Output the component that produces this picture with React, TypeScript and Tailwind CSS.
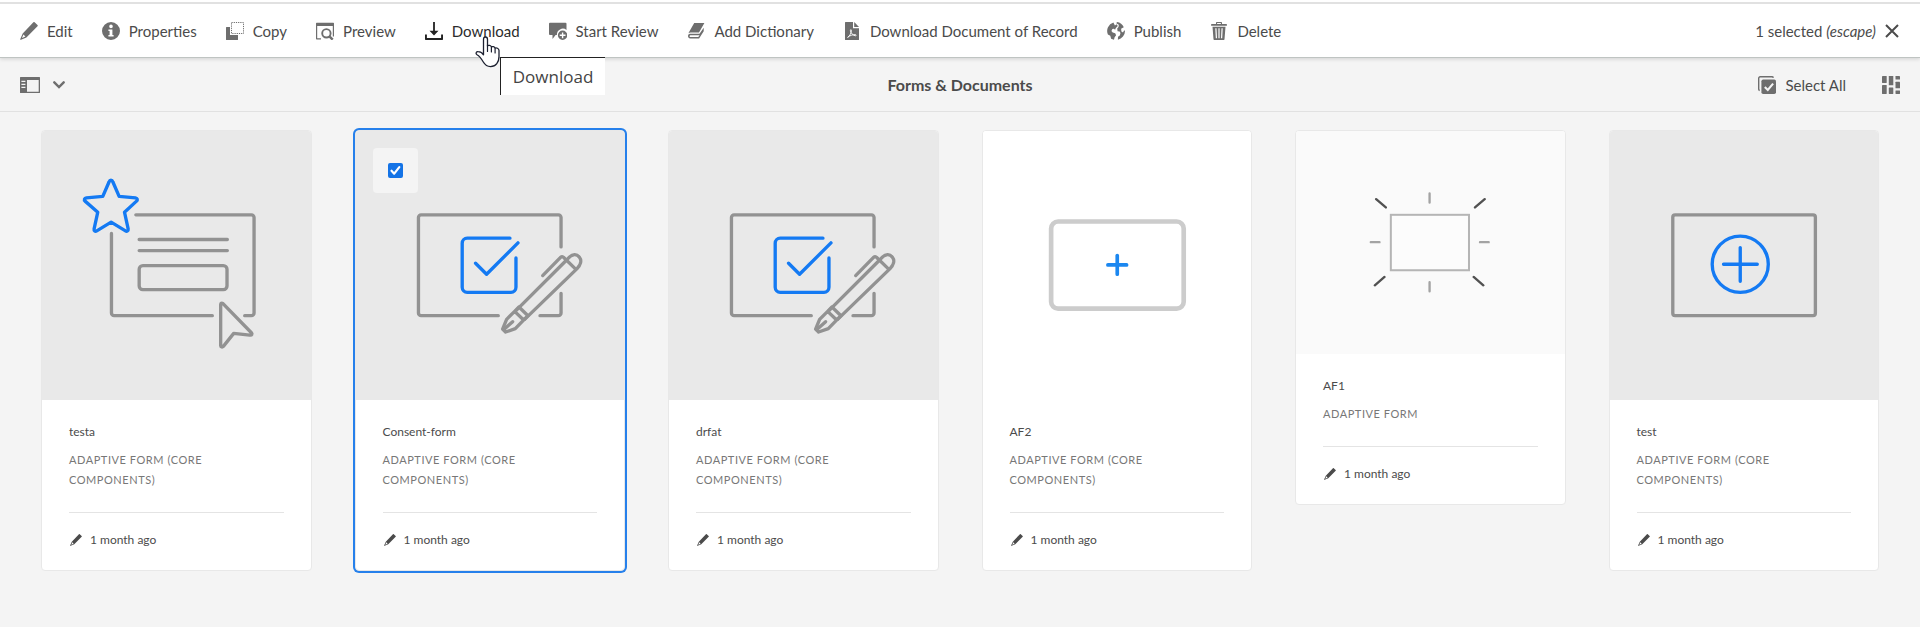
import React from "react";

type IconProps = { className?: string };

function Icon({ children, className = "h-[18px] w-[18px]" }: { children: React.ReactNode; className?: string }) {
  return (
    <svg viewBox="0 0 18 18" className={`shrink-0 ${className}`} fill="currentColor" aria-hidden="true">
      {children}
    </svg>
  );
}

const EditIcon = ({ className }: IconProps) => (
  <Icon className={className}>
    <path d="M17.5 3.1 14.6.3a.8.8 0 0 0-1.2 0L2.7 11.6.3 17a.5.5 0 0 0 .7.7l5.400-2.300L17.500 4.300a.9.9 0 0 0 0-1.200ZM1.900 16.100l1.600-3.600 1.900 2Z" />
  </Icon>
);

const InfoIcon = () => (
  <Icon>
    <path
      fillRule="evenodd"
      d="M9 0a9 9 0 1 0 0 18A9 9 0 0 0 9 0Zm0 2.6a1.8 1.8 0 1 1 0 3.6 1.8 1.8 0 0 1 0-3.6ZM6.4 14.4v-1.3h1.2V8.9H6.4V7.6h4v5.500h1.200v1.300Z"
    />
  </Icon>
);

const CopyIcon = () => (
  <Icon>
    <path d="M0 5.6a.6.6 0 0 1 .6-.6H4v8h8v4.4a.6.6 0 0 1-.6.6H.6a.6.6 0 0 1-.6-.6Z" />
    <rect x="5.500" y=".5" width="12" height="11" fill="none" stroke="currentColor" strokeDasharray="1.200 1" />
  </Icon>
);

const PreviewIcon = () => (
  <Icon>
    <path d="M0 1.4A.6.6 0 0 1 .6.8h16.8a.6.6 0 0 1 .6.6v13h-1.2V4H1.2v12.2H5v1.2H.6a.6.6 0 0 1-.6-.6Z" />
    <circle cx="10.400" cy="11.300" r="4.200" fill="none" stroke="currentColor" strokeWidth="1.900" />
    <path d="m13.200 14.200 3.500 3.500" stroke="currentColor" strokeWidth="2.400" />
  </Icon>
);

const DownloadIcon = () => (
  <Icon>
    <path d="M8.100 0h1.800v8.800h3.600L9 13.600 4.500 8.800h3.600Z" />
    <path d="M0 12.400h1.900v3.700h14.200v-3.700H18v4.900a.7.700 0 0 1-.7.700H.700a.7.700 0 0 1-.7-.7Z" />
  </Icon>
);

const ReviewIcon = () => (
  <Icon>
    <path d="M1 .8h15.500a1 1 0 0 1 1 1v6.100a6 6 0 0 0-9.600 5.200H6.600L3.500 17v-3.900H1a1 1 0 0 1-1-1V1.800a1 1 0 0 1 1-1Z" />
    <path
      fillRule="evenodd"
      d="M13.600 8.600a4.700 4.700 0 1 0 0 9.400 4.700 4.700 0 0 0 0-9.400Zm-.7 1.800h1.400v2.200h2.200V14h-2.200v2.200h-1.400V14h-2.200v-1.400h2.200Z"
    />
  </Icon>
);

const DictionaryIcon = () => (
  <Icon>
    <path d="M7.200 1h10.200L12 10.600H3.600C1.900 10.600 1.200 11.400.800 12.200Z" />
    <path
      fillRule="evenodd"
      d="M1.100 13.200c.300-1 1.200-1.500 2.500-1.500h8.900l4.200-6v3.500l-4.600 7.200H3.400c-1.800 0-2.700-1.500-2.300-3.200Zm2.700 0c-.9 0-1.200.5-1.200 1s.4.900 1.100.900h7.600l1.300-1.900Z"
    />
  </Icon>
);

const PdfIcon = () => (
  <Icon>
    <path d="M2.600 0H10v6.200h6V17.400a.6.600 0 0 1-.6.600H2.600a.6.600 0 0 1-.6-.600V.600a.6.600 0 0 1 .6-.600Z" />
    <path d="M11.200 0 16 5H11.200Z" />
    <path
      d="M4.600 15.400c1.800-.8 3.700-4.400 3.800-7 .1-1.100-1.200-1-1 .2.400 2.600 2.800 5 5 5.200 1.100 0 1-1.200-.3-1.200-2.600 0-5.200.9-7.500 2.800Z"
      fill="none"
      stroke="#fff"
      strokeWidth=".9"
    />
  </Icon>
);

const GlobeIcon = () => (
  <Icon>
    <path d="M6.400.4a9 9 0 0 0-5.500 12.100l2.400 1.200.8 3 2.900 1.100.6-2.600 1.500-2-.9-1.900-2.500-.7-1.300-1.700 1-1.800 1.500-.4 1.200 1 .7-1.700 2-1.900L9.600 2.200 7.900 3.400Z" />
    <path d="M10 .1 9.300 1.200l2.500 1.600-.3 2.200-1.300 1.600.4 2.600 2 .3.900 1.500-.7 2.500-1.800 1.200-.1 3A9 9 0 0 0 18 9l-.8-.7-1.200 2.300-1.600-1.200-.3-2.600 1.700-1 1-.5A9 9 0 0 0 10 .1Z" />
  </Icon>
);

const TrashIcon = () => (
  <Icon>
    <path
      fillRule="evenodd"
      d="M6 2V.8A.8.800 0 0 1 6.800 0h4.400a.8.800 0 0 1 .8.800V2h4.400a.5.500 0 0 1 .5.500v1.300H1.100V2.500A.5.500 0 0 1 1.600 2Zm1.100 0h3.800V1.100H7.100Z"
    />
    <path
      fillRule="evenodd"
      d="M2.500 4.700h13l-1 12.600a.7.700 0 0 1-.7.700H4.200a.7.700 0 0 1-.7-.700ZM5.300 6.200l.5 10h1.200l-.5-10Zm3.100 0v10h1.200v-10Zm3.100 0-.5 10h1.200l.5-10Z"
    />
  </Icon>
);

const RailIcon = () => (
  <svg viewBox="0 0 20 16" className="h-4 w-5 shrink-0" fill="currentColor" aria-hidden="true">
    <path
      fillRule="evenodd"
      d="M.6 0h18.800a.6.600 0 0 1 .6.600v14.800a.6.600 0 0 1-.6.600H.600a.6.600 0 0 1-.6-.600V.600A.6.600 0 0 1 .600 0ZM7 3v11.800h11.700V3ZM1.400 3.700V5h4V3.700Zm0 3V8h4V6.700Zm0 3V11h4V9.700Z"
    />
  </svg>
);

const ChevronIcon = () => (
  <svg viewBox="0 0 12 8" className="h-2 w-3 shrink-0" fill="none" aria-hidden="true">
    <path d="m1.300 1.300 4.700 4.700 4.700-4.700" stroke="currentColor" strokeWidth="2.400" strokeLinecap="round" />
  </svg>
);

const SelectAllIcon = () => (
  <Icon>
    <path d="M1.700 14.500A1.500 1.500 0 0 1 .7 13V2.200A1.500 1.500 0 0 1 2.200.7H14a1.500 1.500 0 0 1 1.400 1" fill="none" stroke="currentColor" strokeWidth="1.400" />
    <rect x="3.400" y="3.400" width="14.600" height="14.600" rx="1.800" />
    <path d="m6.800 11 3 3 5.300-6.400" fill="none" stroke="#f4f4f4" strokeWidth="2.100" />
  </Icon>
);

const CardViewIcon = () => (
  <Icon>
    <rect x="0" y="0" width="4.700" height="7" rx=".4" />
    <rect x="0" y="9" width="4.700" height="9" rx=".4" />
    <rect x="6.800" y="0" width="4.500" height="9.300" rx=".4" />
    <rect x="6.800" y="11.500" width="4.500" height="6.500" rx=".4" />
    <rect x="13.500" y="0" width="4.500" height="3.600" rx=".4" />
    <rect x="13.500" y="5.800" width="4.500" height="6.500" rx=".4" />
    <rect x="13.500" y="14.400" width="4.500" height="3.600" rx=".4" />
  </Icon>
);

const CloseIcon = () => (
  <svg viewBox="0 0 14 14" className="h-[14px] w-[14px] shrink-0" fill="none" aria-hidden="true">
    <path d="m1 1 12 12M13 1 1 13" stroke="currentColor" strokeWidth="2" />
  </svg>
);

function PointerCursor() {
  return (
    <svg viewBox="0 0 26 32" className="h-8 w-[26px]" aria-hidden="true">
      <path
        d="M8.500 18V3.500C8.500 1.800 9.500 1 10.500 1s2 .8 2 2.500V10c.6-1 3.400-.8 3.900.9 1-.7 3.200-.2 3.600 1.200 1.300-.6 4 .1 4 2.500v6c0 5.500-3 10-8.500 10-3.500 0-5.500-1.700-7.200-4.600C6.600 23 5 20.300 2 18.700c-1.700-1.200-.8-3.300 1.200-3.100 2 .1 4 1 5.300 3.200Z"
        fill="#fff"
        stroke="#1c2030"
        strokeWidth="1.300"
        strokeLinejoin="round"
      />
      <path d="M12.500 9v6.500M16.400 11v5M20.100 12.500V17" stroke="#1c2030" strokeWidth="1.200" strokeLinecap="round" />
    </svg>
  );
}

const artStroke = { fill: "none", strokeWidth: 10, strokeLinecap: "round", strokeLinejoin: "round" } as const;

function TemplateArt() {
  return (
    <svg viewBox="126 63 804 804" className="w-full" aria-hidden="true">
      <g {...artStroke} stroke="#929292">
        <path d="M407 314h346a8 8 0 0 1 8 8v286a8 8 0 0 1-8 8h-20M334 370v238a8 8 0 0 0 8 8h294" />
        <path d="M417 388h264M417 421h264" />
        <rect x="417" y="466" width="263" height="72" rx="11" />
        <path d="M661 583v122c0 5 5 6 8 3l31-39 48 5c7 1 8-4 5-7l-85-87c-4-3-7-1-7 3Z" />
      </g>
      <path
        {...artStroke}
        stroke="#147af3"
        d="M327 215c2-6 9-6 11 0l19 44 49 4c6 1 7 7 3 10l-36 33 11 50c1 6-4 9-8 6l-43-26-43 26c-5 3-9 0-8-6l11-50-38-33c-4-3-2-9 4-10l49-4Z"
      />
    </svg>
  );
}

function SignArt() {
  return (
    <svg viewBox="58 63 804 804" className="w-full" aria-hidden="true">
      <g {...artStroke} stroke="#929292">
        <path d="M672 410v-88a8 8 0 0 0-8-8H253a8 8 0 0 0-8 8v286a8 8 0 0 0 8 8h231M609 616h55a8 8 0 0 0 8-8v-59" />
        <path d="m537 601 151-151c20-24 32-18 39-9 8 10 3 24-7 34L563 627" />
        <path d="m617 496 52-53c4-5 8-5 11-1l35 34" />
        <path d="m533 603 27 26 13-13-27-26ZM533 603l-24 24-12 29 9 9 29-10 24-25" />
        <path d="m500 658 27-24" />
      </g>
      <path
        {...artStroke}
        stroke="#147af3"
        d="M519 384H391a15 15 0 0 0-15 15v132a15 15 0 0 0 15 15h131a15 15 0 0 0 15-15v-88M416 459l33 33 94-94"
      />
    </svg>
  );
}

function BlankArt() {
  return (
    <svg viewBox="69 63 804 804" className="w-full" aria-hidden="true">
      <rect x="273" y="334" width="397" height="261" rx="21" fill="none" stroke="#ccc" strokeWidth="14" />
      <path d="M471 436v56M443 464h56" stroke="#1b87f0" strokeWidth="11" strokeLinecap="round" />
    </svg>
  );
}

function AdaptiveArt() {
  return (
    <svg viewBox="79 63 804 669" className="w-full" aria-hidden="true">
      <rect x="363" y="314" width="234" height="166" fill="#fcfcfc" stroke="#b5b5b5" strokeWidth="6" />
      <path d="M479 250v27M479 516v27M303 396h26M630 396h26" stroke="#a3a3a3" strokeWidth="7" strokeLinecap="round" />
      <path d="m319 267 29 25M644 267l-29 25M344 500l-29 25M611 500l29 25" stroke="#515151" strokeWidth="7" strokeLinecap="round" />
    </svg>
  );
}

function AddArt() {
  return (
    <svg viewBox="60 63 804 804" className="w-full" aria-hidden="true">
      <rect {...artStroke} x="248" y="314" width="427" height="302" rx="7" stroke="#929292" />
      <g {...artStroke} stroke="#147af3">
        <circle cx="450" cy="462" r="84" />
        <path d="M450 412v101M400 462h101" />
      </g>
    </svg>
  );
}

const actions = [
  { label: "Edit", icon: <EditIcon /> },
  { label: "Properties", icon: <InfoIcon /> },
  { label: "Copy", icon: <CopyIcon /> },
  { label: "Preview", icon: <PreviewIcon /> },
  { label: "Download", icon: <DownloadIcon />, hovered: true },
  { label: "Start Review", icon: <ReviewIcon /> },
  { label: "Add Dictionary", icon: <DictionaryIcon /> },
  { label: "Download Document of Record", icon: <PdfIcon /> },
  { label: "Publish", icon: <GlobeIcon /> },
  { label: "Delete", icon: <TrashIcon /> },
];

const core = "Adaptive Form (Core Components)";

const cards = [
  { name: "testa", type: core, art: <TemplateArt />, tone: "bg-[#e9e9e9]" },
  { name: "Consent-form", type: core, art: <SignArt />, tone: "bg-[#e9e9e9]", selected: true },
  { name: "drfat", type: core, art: <SignArt />, tone: "bg-[#e9e9e9]" },
  { name: "AF2", type: core, art: <BlankArt />, tone: "bg-white" },
  { name: "AF1", type: "Adaptive Form", art: <AdaptiveArt />, tone: "bg-[#fafafa]" },
  { name: "test", type: core, art: <AddArt />, tone: "bg-[#e9e9e9]" },
];

function Tooltip({ text }: { text: string }) {
  return (
    <div
      role="tooltip"
      className="absolute left-[75px] top-9 z-20 border-l border-t border-[#222] bg-white px-3 pb-[6px] pt-[7px] font-['Open_Sans',sans-serif] text-[17px] leading-6 text-[#444]"
    >
      {text}
    </div>
  );
}

function Card({ card }: { card: (typeof cards)[number] }) {
  const ring = card.selected ? "ring-2 ring-[#2680eb]" : "";
  return (
    <article className={`relative rounded-[4px] border border-[#e8e8e8] bg-white ${ring}`}>
      <div className={`flex overflow-hidden rounded-t-[3px] ${card.tone}`}>{card.art}</div>
      {card.selected && (
        <label className="absolute left-[17px] top-[17px] flex h-[45px] w-[45px] items-center justify-center rounded-[4px] bg-[#f4f4f4]">
          <input
            type="checkbox"
            defaultChecked
            aria-label={`Select ${card.name}`}
            className="peer h-[15px] w-[15px] appearance-none rounded-[2px] border-2 border-[#6e6e6e] bg-white checked:border-[#1473e6] checked:bg-[#1473e6]"
          />
          <svg viewBox="0 0 15 15" className="pointer-events-none absolute hidden h-[15px] w-[15px] peer-checked:block" aria-hidden="true">
            <path d="m3.500 7.700 2.700 3 5.100-6.600" fill="none" stroke="#fff" strokeWidth="2.200" strokeLinecap="round" strokeLinejoin="round" />
          </svg>
        </label>
      )}
      <div className="px-[27px] pb-5 pt-[22px]">
        <h2 className="text-[12px] leading-5 text-[#4b4b4b]">{card.name}</h2>
        <p className="mt-2 text-[11px] uppercase leading-5 tracking-wider text-[#777]">{card.type}</p>
        <div className="mt-[22px] flex items-center gap-2 border-t border-[#e4e4e4] pt-[17px] text-[12px] leading-5 text-[#4b4b4b]">
          <EditIcon className="ml-[1px] h-3 w-3" />
          <span>1 month ago</span>
        </div>
      </div>
    </article>
  );
}

export default function App() {
  return (
    <div className="min-h-screen bg-[#f4f4f4] font-['Lato','Open_Sans',sans-serif] text-[15px] leading-5 text-[#4b4b4b]">
      <header className="relative z-10 border-b border-[#bfc4c2] bg-white pt-[2px] shadow-[0_1px_4px_rgba(0,0,0,0.15)]">
        <div className="flex items-center justify-between border-t-2 border-[#e1e1e1] pl-5 pr-[21px]">
          <nav className="flex h-[53px] items-center gap-[29px]">
            {actions.map((a) => (
              <div key={a.label} className="relative">
                <button type="button" className={`flex items-center gap-[9px] whitespace-nowrap ${a.hovered ? "text-[#222]" : "text-[#6e6e6e]"}`}>
                  {a.icon}
                  <span className={a.hovered ? "text-[#2c2c2c]" : "text-[#4b4b4b]"}>{a.label}</span>
                </button>
                {a.hovered && (
                  <>
                    <Tooltip text="Download" />
                    <div className="pointer-events-none absolute left-[50px] top-[15px] z-30">
                      <PointerCursor />
                    </div>
                  </>
                )}
              </div>
            ))}
          </nav>
          <button type="button" className="flex items-center gap-[9px] whitespace-nowrap">
            <span>
              1 selected <em>(escape)</em>
            </span>
            <CloseIcon />
          </button>
        </div>
      </header>

      <div className="grid h-[54px] grid-cols-[1fr_auto_1fr] items-center border-b border-[#e1e1e1] px-5 text-[#6e6e6e]">
        <button type="button" aria-label="Toggle side rail" className="flex items-center gap-[13px] justify-self-start">
          <RailIcon />
          <ChevronIcon />
        </button>
        <h1 className="text-base font-bold leading-5 text-[#4b4b4b]">Forms &amp; Documents</h1>
        <div className="flex items-center gap-9 justify-self-end">
          <button type="button" className="flex items-center gap-[9px]">
            <SelectAllIcon />
            <span className="text-[#4b4b4b]">Select All</span>
          </button>
          <button type="button" aria-label="Card view">
            <CardViewIcon />
          </button>
        </div>
      </div>

      <main className="grid grid-cols-6 items-start gap-[43px] px-[41px] pb-12 pt-[18px]">
        {cards.map((c) => (
          <Card key={c.name} card={c} />
        ))}
      </main>
    </div>
  );
}
